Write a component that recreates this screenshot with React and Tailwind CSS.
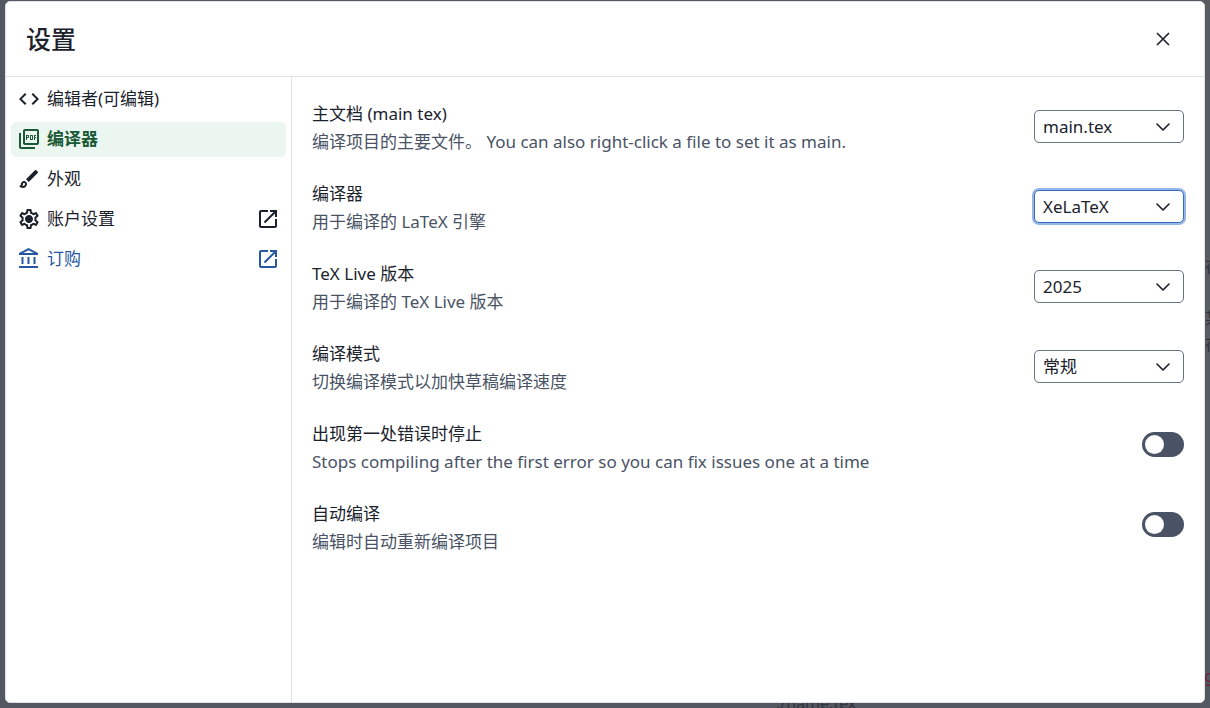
import {
  MdCode,
  MdOutlineAccountBalance,
  MdOutlineBrush,
  MdOutlineOpenInNew,
  MdOutlinePictureAsPdf,
  MdOutlineSettings,
} from 'react-icons/md';
import clsx from 'clsx';

// Outlined gear with a solid hub
function GearIcon({ className }) {
  return (
    <svg viewBox="0 0 24 24" fill="currentColor" className={className}>
      <MdOutlineSettings size={24} />
      <circle cx="12" cy="12" r="3.3" />
    </svg>
  );
}

const tabs = [
  { label: '编辑者(可编辑)', icon: MdCode },
  { label: '编译器', icon: MdOutlinePictureAsPdf, active: true },
  { label: '外观', icon: MdOutlineBrush },
  { label: '账户设置', icon: GearIcon, external: true },
  { label: '订购', icon: MdOutlineAccountBalance, external: true, link: true },
];

const settings = [
  {
    id: 'main-document',
    title: '主文档 (main tex)',
    description: '编译项目的主要文件。 You can also right-click a file to set it as main.',
    options: ['main.tex'],
  },
  {
    id: 'compiler',
    title: '编译器',
    description: '用于编译的 LaTeX 引擎',
    options: ['XeLaTeX', 'pdfLaTeX', 'LaTeX', 'LuaLaTeX'],
    focused: true,
  },
  {
    id: 'tex-live',
    title: 'TeX Live 版本',
    description: '用于编译的 TeX Live 版本',
    options: ['2025', '2024', '2023'],
  },
  {
    id: 'compile-mode',
    title: '编译模式',
    description: '切换编译模式以加快草稿编译速度',
    options: ['常规', '快速'],
  },
  {
    id: 'stop-on-error',
    title: '出现第一处错误时停止',
    description: 'Stops compiling after the first error so you can fix issues one at a time',
  },
  {
    id: 'auto-compile',
    title: '自动编译',
    description: '编辑时自动重新编译项目',
  },
];

function Tab({ tab }) {
  const Icon = tab.icon;
  return (
    <a
      href="#"
      aria-current={tab.active ? 'page' : undefined}
      className={clsx(
        'flex h-[35px] items-start gap-1.5 rounded-md px-1.5 pt-[5px]',
        tab.active && 'bg-[#eaf6ef] font-bold text-[#195936]',
        tab.link && 'text-[#2857a1]',
      )}
    >
      <Icon className="size-6 shrink-0" />
      <span className="flex-1">{tab.label}</span>
      {tab.external && <MdOutlineOpenInNew className="size-6 shrink-0" />}
    </a>
  );
}

function Dropdown({ id, options, focused }) {
  return (
    <div className="mt-[10px] grid w-[150px] shrink-0 items-center">
      <select
        id={id}
        className={clsx(
          'col-start-1 row-start-1 h-[33px] appearance-none rounded-[5px] border bg-white pr-8 pl-2 outline-none',
          focused ? 'border-[#366cbf] ring-2 ring-[#97b6e5]' : 'border-[#677283]',
        )}
      >
        {options.map((option) => (
          <option key={option}>{option}</option>
        ))}
      </select>
      <svg
        viewBox="0 0 14 8"
        fill="none"
        stroke="currentColor"
        strokeWidth="1.6"
        strokeLinecap="round"
        strokeLinejoin="round"
        className="pointer-events-none col-start-1 row-start-1 mr-3.5 h-2 w-3.5 justify-self-end"
      >
        <path d="M1 1l6 6 6-6" />
      </svg>
    </div>
  );
}

function Toggle({ id }) {
  return (
    <input
      id={id}
      type="checkbox"
      role="switch"
      className="mt-3 flex h-[25px] w-[42px] shrink-0 appearance-none rounded-full bg-[#495365] p-[3px] before:size-[19px] before:rounded-full before:bg-white checked:justify-end"
    />
  );
}

function Setting({ setting }) {
  return (
    <div className="flex items-start justify-between gap-4">
      <div className="leading-7">
        <label htmlFor={setting.id} className="block">
          {setting.title}
        </label>
        <p className="text-[#495365]">{setting.description}</p>
      </div>
      {setting.options ? (
        <Dropdown id={setting.id} options={setting.options} focused={setting.focused} />
      ) : (
        <Toggle id={setting.id} />
      )}
    </div>
  );
}

// The dimmed editor that shows around the edges of the dialog
function Backdrop() {
  return (
    <div aria-hidden="true" className="absolute inset-0 overflow-hidden bg-[#535761] text-base text-[#30343d]">
      <div className="absolute top-0 right-0 h-[560px] w-1.5 bg-[#585b60]" />
      <span className="absolute bottom-[-7px] left-[776px]">./name.tex</span>
      <span className="absolute top-[254px] right-[-11px]">存</span>
      <span className="absolute top-[306px] right-[-11px]">某</span>
      <span className="absolute top-[332px] right-[-11px]">存</span>
      <span className="absolute right-[-4px] bottom-[20px] text-[#6b2434]">g</span>
    </div>
  );
}

export default function App() {
  return (
    <div className="relative flex min-h-screen font-['Noto_Sans','Noto_Sans_CJK_SC',sans-serif] text-[17px] leading-6 text-[#1b222c]">
      <Backdrop />
      <div
        role="dialog"
        aria-labelledby="settings-title"
        className="relative mx-[5px] mt-px mb-[5px] flex flex-1 flex-col rounded-[5px] border border-[#dfe2e7] bg-white"
      >
        <header className="flex h-[75px] items-center justify-between border-b border-[#dde0e4] pr-[30px] pl-5">
          <h1 id="settings-title" className="text-[25px] font-medium">
            设置
          </h1>
          <button type="button" aria-label="Close" className="p-1">
            <svg viewBox="0 0 14 14" stroke="currentColor" strokeWidth="1.6" className="size-3.5">
              <path d="M1 1l12 12M13 1L1 13" />
            </svg>
          </button>
        </header>
        <div className="flex flex-1">
          <nav className="flex w-[286px] shrink-0 flex-col gap-[5px] border-r border-[#dde0e4] p-[5px]">
            {tabs.map((tab) => (
              <Tab key={tab.label} tab={tab} />
            ))}
          </nav>
          <main className="flex flex-1 flex-col gap-6 px-5 py-[23px]">
            {settings.map((setting) => (
              <Setting key={setting.id} setting={setting} />
            ))}
          </main>
        </div>
      </div>
    </div>
  );
}
